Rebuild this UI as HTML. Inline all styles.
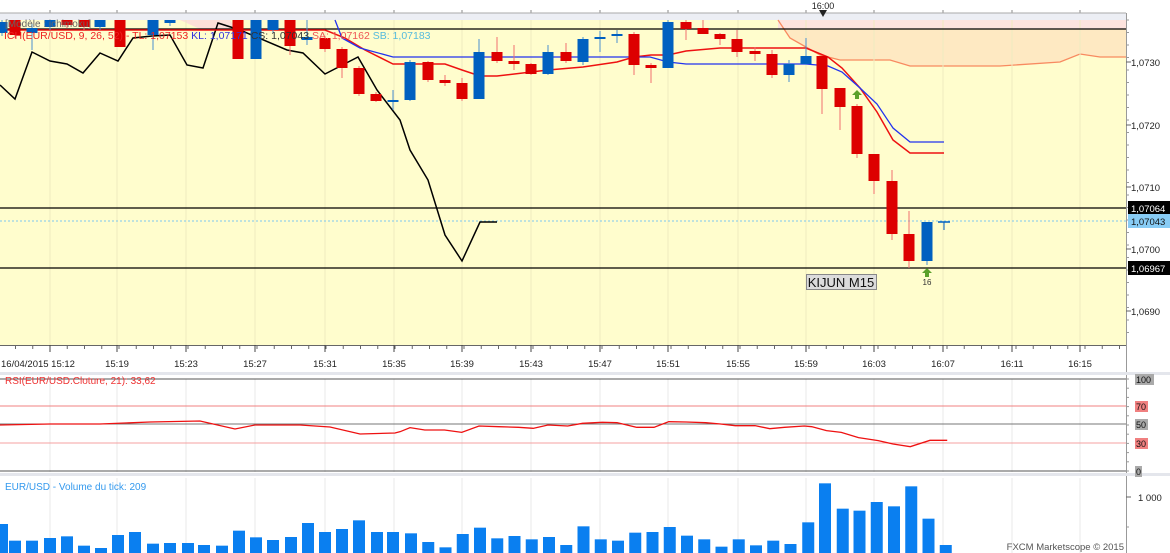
<!DOCTYPE html>
<html><head><meta charset="utf-8"><style>
html,body{margin:0;padding:0;background:#fff;width:1170px;height:553px;overflow:hidden}
svg{display:block;font-family:"Liberation Sans",sans-serif}
</style></head><body>
<svg id="s" width="1170" height="553" xmlns="http://www.w3.org/2000/svg"></svg>
<script>
var S=document.getElementById('s'),h='';
function R(x,y,w,hh,f,ex){h+='<rect x="'+x+'" y="'+y+'" width="'+w+'" height="'+hh+'" fill="'+f+'" '+(ex||'')+'/>';}
function L(x1,y1,x2,y2,c,w,ex){h+='<line x1="'+x1+'" y1="'+y1+'" x2="'+x2+'" y2="'+y2+'" stroke="'+c+'" stroke-width="'+(w||1)+'" '+(ex||'')+'/>';}
function P(pts,c,w){h+='<polyline fill="none" stroke="'+c+'" stroke-width="'+(w||1.5)+'" points="'+pts.map(function(p){return p.join(',')}).join(' ')+'"/>';}
function T(x,y,t,c,sz,ex){h+='<text x="'+x+'" y="'+y+'" fill="'+c+'" font-size="'+(sz||10)+'" '+(ex||'')+'>'+t+'</text>';}
function MX(px){return 411+(px-22)*17.25/35;}
R(0,13,1126,332,'#fffdcd');
R(0,13,1126,7,'#eceef4');
h+='<polygon points="778,20 790,38 820,55 840,60 890,60 910,66 1000,66 1060,62 1080,54 1100,57 1126,57 1126,20" fill="#fee9c2"/>';
R(778,20,348,9,'#fde3de');
h+='<polygon points="180,20 200,29 236,29 230,20" fill="#fde0d8"/>';
P([[778,20],[790,38],[820,55],[840,60],[890,60],[910,66],[1000,66],[1060,62],[1080,54],[1100,57],[1126,57]],'#f88a60',1.3);
var gx=[50,117,186,255,325,394,462,531,600,668,738,806,874,943,1012,1080];
gx.forEach(function(x){L(x,20,x,345,'#efeac0');L(x,379,x,472,'#e8e8e8');L(x,478,x,553,'#e8e8e8');L(x,10,x,13,'#888')});
L(0,13,1126,13,'#aaa');
T(823,9,'16:00','#222',9,'text-anchor="middle"');
h+='<polygon points="819,10 827,10 823,17" fill="#222"/>';
L(0,29,1126,29,'#000',1.2);L(0,208,1126,208,'#000',1.2);L(0,268,1126,268,'#000',1.2);
L(0,221,1126,221,'#7cc8f0',1,'stroke-dasharray="2,2"');
P([[0,85],[15,99],[32,52],[50,61],[67,64],[83,73],[100,53],[118,61],[133,38],[152,36],[170,35],[187,65],[203,68],[218,23],[240,30],[287,50],[303,53],[325,74],[358,57],[377,90],[400,120],[410,150],[428,180],[445,235],[462,261],[480,222],[497,222]],'#000',1.5);
P([[0,30],[325,30],[345,38],[365,50],[393,64],[445,64],[462,70],[480,76],[497,76],[548,70],[583,67],[617,62],[634,57],[651,55],[668,55],[686,51],[720,48],[806,48],[828,57],[842,68],[860,88],[877,112],[893,140],[910,153],[944,153]],'#ee1111',1.5);
P([[335,20],[342,38],[360,48],[393,57],[650,57],[668,62],[686,64],[806,64],[828,66],[842,72],[860,88],[877,104],[893,128],[910,142],[944,142]],'#2233ee',1.3);
var r='#dd0000',b='#0060c0',C=[
[2,22,33,20,36,b],[15,20,35,20,38,r],[32,28,33,24,50,b],[50,20,27,20,30,b],[67,20,25,20,28,r],[84,20,27,20,30,r],[100,20,27,20,30,b],[120,20,47,20,47,r],[153,20,35,20,50,b],[170,20,23,20,26,b],[238,20,59,20,59,r],[256,20,59,20,59,b],[273,20,30,20,33,b],[290,20,46,20,55,r],
[307,37,40,20,45,b],[325,38,49,36,52,r],[342,49,68,47,78,r],[359,68,94,66,96,r],[376,94,101,92,102,r],[393,100,102,90,110,b],[410,62,100,60,101,b],[428,62,80,61,82,r],[445,80,83,75,86,r],[462,83,99,78,101,r],[479,52,99,39,99,b],[497,52,61,37,63,r],[514,61,64,45,70,r],[531,64,74,63,75,r],[548,52,74,45,75,b],[566,52,61,43,63,r],[583,39,62,37,65,b],[600,37,39,31,52,b],[617,34,36,30,43,b],[634,34,65,32,75,r],[651,65,68,63,83,r],[668,22,68,20,68,b],[686,22,29,20,40,r],[703,28,34,20,34,r],[720,34,39,33,45,r],[737,39,52,30,57,r],[755,51,54,47,61,r],[772,54,75,50,78,r],[789,64,75,60,82,b],[806,56,64,38,65,b],[822,56,89,56,114,r],[840,88,107,88,130,r],[857,106,154,104,158,r],[874,154,181,154,194,r],[892,181,234,170,240,r],[909,234,261,211,268,r],[927,222,261,222,265,b]];
C.forEach(function(c){L(c[0],c[3],c[0],c[4],c[5]==r?'#f07070':'#4a90d0',1);R(c[0]-5.5,c[1],11,Math.max(1.5,c[2]-c[1]),c[5]);});
L(938,222,950,222,b,1.5);L(944,222,944,230,b,1);
h+='<polygon points="857,90 852,95 855,95 855,99 859,99 859,95 862,95" fill="#5aa02a"/>';
h+='<polygon points="927,268 922,273 925,273 925,277 929,277 929,273 932,273" fill="#5aa02a"/>';
T(927,285,'16','#333',8,'text-anchor="middle"');
R(806.5,274.5,70,15,'#dcdcdc','stroke="#888"');T(841,287,'KIJUN M15','#111',13,'text-anchor="middle"');
T(5,27,'[Modèle : ichimoku]','#666',10);
h+='<text x="4" y="39" font-size="10.5"><tspan fill="#e22">ICH(EUR/USD, 9, 26, 52) - TL: 1,07153 </tspan><tspan fill="#33d">KL: 1,07171 </tspan><tspan fill="#333">CS: 1,07043 </tspan><tspan fill="#e55">SA: 1,07162 </tspan><tspan fill="#5bd">SB: 1,07183</tspan></text>';
L(1126.5,13,1126.5,553,'#999');
R(1127,13,43,332,'#fff');
L(1126.5,13,1126.5,345,'#999');
[[62,'1,0730'],[125,'1,0720'],[187,'1,0710'],[249,'1,0700'],[311,'1,0690']].forEach(function(p){L(1126,p[0],1131,p[0],'#666');T(1131,p[0]+4,p[1],'#222',9.5);});
for(var y=20;y<345;y+=12.5)L(1126,y,1129,y,'#999');
R(1128,201,42,14,'#000');T(1131,212,'1,07064','#fff',9.5);
R(1128,214,42,14,'#88ccf5');T(1131,225,'1,07043','#111',9.5);
R(1128,261,42,14,'#000');T(1131,272,'1,06967','#fff',9.5);
R(0,345,1126,28,'#fff');L(0,345.5,1126,345.5,'#666');
for(var x=15.5;x<1126;x+=17.25)L(x,345,x,349,'#666');
gx.forEach(function(x){L(x,345,x,352,'#444')});
T(1,367,'16/04/2015 15:12','#222',9.5);
['15:19','15:23','15:27','15:31','15:35','15:39','15:43','15:47','15:51','15:55','15:59','16:03','16:07','16:11','16:15'].forEach(function(t,i){T(gx[i+1],367,t,'#222',9.5,'text-anchor="middle"')});
R(0,372,1170,3,'#e4e6ec');R(0,473,1170,3,'#e4e6ec');
L(0,379,1126,379,'#555');L(0,471,1126,471,'#555');L(0,424,1126,424,'#777');
L(0,406,1126,406,'#f08080');L(0,443,1126,443,'#f5a0a0');
T(5,384,'RSI(EUR/USD.Cloture, 21): 33,62','#e33',10);
var rp=[[0,185],[20,173],[50,180],[90,180],[125,187],[160,168],[200,170],[240,172],[270,175],[300,165],[340,168],[370,160],[410,157],[440,158],[480,172],[515,172],[545,155],[580,156],[620,158],[650,162],[680,167],[720,167],[750,176],[780,172],[820,168],[835,170],[865,182],[895,187],[930,203],[970,212],[1000,222],[1035,230],[1075,211],[1110,211]].map(function(p){return[MX(p[0]),370+p[1]/3]});
var lp=[[0,425],[50,424],[100,424],[150,422],[200,421],[235,429],[255,425],[300,425],[330,427],[360,434],[395,433]];
P(lp.concat(rp),'#ee1111',1.3);
[[379,'100','#aaa'],[406,'70','#f08080'],[424,'50','#aaa'],[443,'30','#f08080'],[471,'0','#aaa']].forEach(function(p){R(1135,p[0]-5,p[1].length*6+1,11,p[2]);T(1136,p[0]+4,p[1],'#111',9);});
for(var y=379;y<473;y+=9.2)L(1126,y,1129,y,'#999');
T(5,490,'EUR/USD - Volume du tick: 209','#3399ee',10);
var vl=[[2,552],[15,602],[32,602],[50,594],[67,589],[84,617],[101,624],[118,585],[135,576],[153,611],[170,609],[188,609],[204,615],[222,617],[239,572],[256,592],[273,600],[291,591],[308,549],[325,576],[342,567],[359,541],[377,576],[393,576]];
vl.forEach(function(v){var y=340+v[1]/3;R(v[0]-6,y,12,553-y,'#0a7ff0');});
var vr=[[22,490],[57,516],[92,532],[127,492],[162,473],[197,505],[232,498],[267,508],[302,501],[337,525],[372,469],[407,508],[442,512],[477,488],[512,486],[547,471],[582,497],[617,508],[652,530],[687,508],[722,526],[757,512],[792,522],[828,457],[862,340],[898,416],[932,422],[967,396],[1002,409],[1037,349],[1072,446],[1107,525]];
vr.forEach(function(v){var x=MX(v[0]),y=370+v[1]/3;R(x-6,y,12,553-y,'#0a7ff0');});
L(1126,497,1131,497,'#666');T(1138,501,'1 000','#222',9.5);
L(1126,527,1129,527,'#999');
T(1124,550,'FXCM Marketscope © 2015','#555',9.5,'text-anchor="end"');
S.innerHTML=h;
</script>
</body></html>
